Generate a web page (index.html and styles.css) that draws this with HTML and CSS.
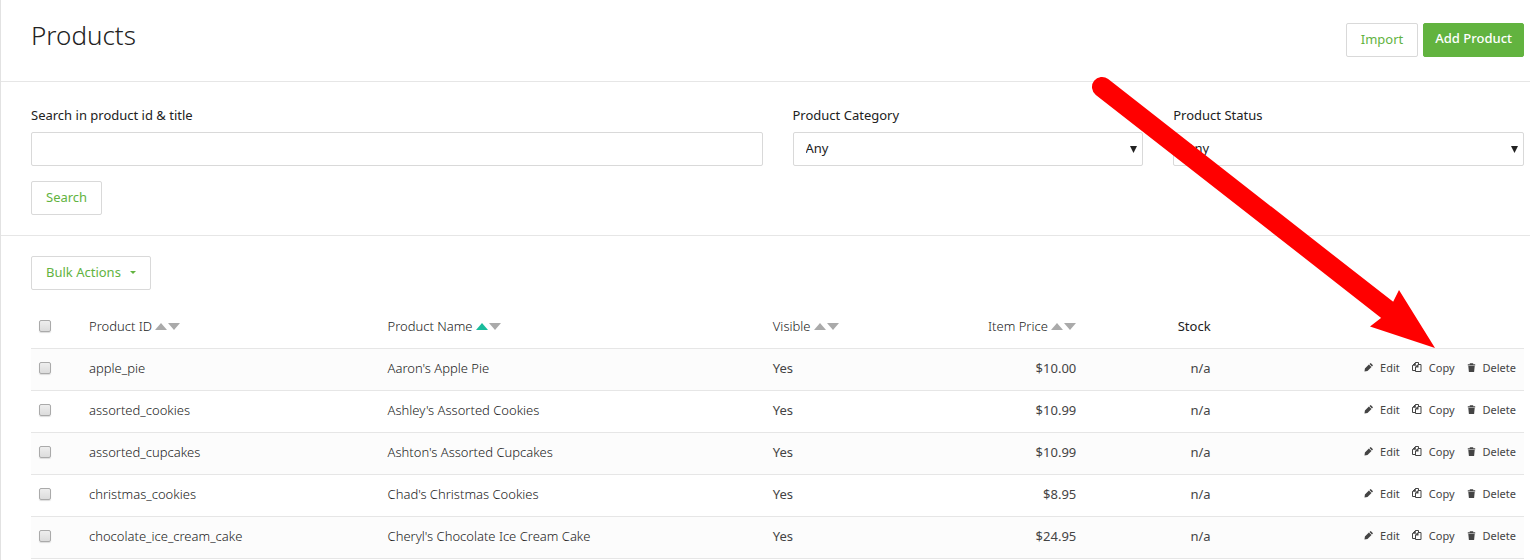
FILE: index.html
```html
<!DOCTYPE html>
<html lang="en">
<head>
<meta charset="utf-8">
<title>Products</title>
<link rel="stylesheet" href="styles.css">
</head>
<body>
<svg class="symbols" aria-hidden="true">
  <symbol id="pencil" viewBox="0 0 9 9"><path d="M.5 8.500l.4-3 4-4 2.600 2.600-4 4zM5.500 1L6.700 0 9 2.200 8 3.500z"/></symbol>
  <symbol id="copy" viewBox="0 0 10 11"><path fill="none" stroke="currentColor" d="M3.500 8.500h-3v-5l3-3h3v2M6 2.500h3v7H3.500V5z"/><path d="M0 3.800L3.800 0v3.800zM3 5.500L6.500 2v3.500z"/></symbol>
  <symbol id="trash" viewBox="0 0 8 9"><path d="M.3 1.200h2V.3h3.400v.9h2v1.300H.3zM.8 3h6.400L6.600 9H1.400z"/></symbol>
</svg>
<main class="page">
  <header class="page-header">
    <h1 class="page-title">Products</h1>
    <div class="page-actions">
      <button class="btn" type="button">Import</button>
      <button class="btn btn-primary" type="button">Add Product</button>
    </div>
  </header>

  <form class="filters">
    <div class="field field-wide">
      <label for="query">Search in product id &amp; title</label>
      <input class="control" id="query" type="text">
    </div>
    <div class="field">
      <label for="category">Product Category</label>
      <select class="control" id="category"><option>Any</option></select>
    </div>
    <div class="field">
      <label for="status">Product Status</label>
      <select class="control" id="status"><option>Any</option></select>
    </div>
    <div class="filter-submit"><button class="btn" type="button">Search</button></div>
  </form>

  <section class="listing">
    <button class="btn bulk" type="button">Bulk Actions<span class="caret"></span></button>
    <table class="products">
      <colgroup><col class="col-check"><col class="col-id"><col class="col-name"><col class="col-visible"><col class="col-price"><col class="col-stock"><col></colgroup>
      <thead>
        <tr>
          <th><input class="check" type="checkbox" aria-label="Select all products"></th>
          <th>Product ID <span class="sort"><i class="up"></i><i class="down"></i></span></th>
          <th>Product Name <span class="sort"><i class="up active"></i><i class="down"></i></span></th>
          <th>Visible <span class="sort"><i class="up"></i><i class="down"></i></span></th>
          <th class="right">Item Price <span class="sort"><i class="up"></i><i class="down"></i></span></th>
          <th class="right strong">Stock</th>
          <th></th>
        </tr>
      </thead>
      <tbody id="rows"></tbody>
    </table>
  </section>

  <svg class="pointer" viewBox="0 0 345 273" aria-hidden="true">
    <path d="M12 11L298 234.500" stroke="#f00" stroke-width="20" stroke-linecap="round"/>
    <path d="M345 272L309 214 303 226 291 242 280 250.500z" fill="#f00"/>
  </svg>
</main>
<script src="products.js"></script>
</body>
</html>
```
FILE: styles.css
```css
* { box-sizing: border-box; }
body {
  margin: 0;
  background: #fff;
  color: #222;
  font: 13px/20px "Noto Sans", "Open Sans", sans-serif;
}
button, input, select { font: inherit; color: inherit; }
.symbols { display: none; }
.page {
  position: relative;
  min-height: 100vh;
  border-left: 1px solid #e2e2e2;
}
.page-header {
  display: flex;
  justify-content: space-between;
  align-items: flex-start;
  padding: 23px 6px 24px 30px;
  border-bottom: 1px solid #e6e6e6;
}
.page-title {
  margin: 0;
  font-size: 26px;
  line-height: 24px;
  font-weight: 300;
}
.page-actions { display: flex; gap: 5px; }
.btn {
  height: 34px;
  padding: 0 14px 2px;
  border: 1px solid #d9d9d9;
  border-radius: 2px;
  background: #fff;
  color: #62b33f;
  line-height: 20px;
}
.btn-primary {
  padding: 0 11px 4px;
  border-color: #62b33f;
  background: #62b33f;
  color: #fff;
  font-weight: 500;
}
.filters {
  display: grid;
  grid-template-columns: repeat(4, minmax(0, 1fr));
  gap: 15px 30px;
  padding: 23px 6px 20px 30px;
  border-bottom: 1px solid #e6e6e6;
}
.field { display: flex; flex-direction: column; gap: 7px; }
.field-wide { grid-column: span 2; }
.filter-submit { grid-column: 1 / -1; }
.control {
  width: 100%;
  height: 34px;
  padding: 0 12px 2px;
  border: 1px solid #d9d9d9;
  border-radius: 2px;
  background: #fff;
}
select.control {
  appearance: none;
  background: #fff url("data:image/svg+xml,%3Csvg xmlns='http://www.w3.org/2000/svg' width='8' height='7'%3E%3Cpath d='M1 0h7L4.500 7z' fill='%23222'/%3E%3C/svg%3E") no-repeat right 5px center;
}
.listing { padding: 20px 6px 0 30px; }
.bulk { display: flex; align-items: center; gap: 9px; }
.caret {
  border: 3px solid transparent;
  border-top-color: currentColor;
  border-bottom: 0;
}
.products {
  width: 100%;
  margin-top: 15px;
  table-layout: fixed;
  border-collapse: collapse;
}
.col-check { width: 50px; }
.col-id { width: 20%; }
.col-name { width: 25.8%; }
.col-visible { width: 11%; }
.col-price { width: 10.4%; }
.col-stock { width: 9%; }
.products th, .products td {
  height: 42px;
  padding: 0 8px 3px;
  border-bottom: 1px solid #e6e6e6;
  font-weight: 300;
  text-align: left;
  white-space: nowrap;
}
.products thead th { height: 43px; padding-bottom: 0; }
.products tbody tr:nth-child(odd) { background: #fcfcfc; }
.products .right { text-align: right; }
.products .strong { font-weight: 400; }
.products .plain { font-weight: 400; color: #444; }
.products td:first-child { padding-bottom: 2px; }
.check {
  display: block;
  appearance: none;
  width: 12px;
  height: 12px;
  margin: 0;
  border: 1px solid #aaa;
  border-radius: 2px;
  background: linear-gradient(#eee, #dcdcdc);
  box-shadow: 0 1px 1px #ddd;
}
.sort { display: inline-flex; gap: 1px; vertical-align: 1px; }
.up, .down { border: 6px solid transparent; }
.up { border-top: 0; border-bottom: 7px solid #aaa; }
.down { border-bottom: 0; border-top: 7px solid #aaa; }
.up.active { border-bottom-color: #1abc9c; }
.row-actions { display: flex; justify-content: flex-end; gap: 12px; }
.row-actions a {
  display: flex;
  align-items: center;
  gap: 7px;
  color: #444;
  font-size: 11px;
  font-weight: 400;
  text-decoration: none;
}
.icon { width: 9px; height: 9px; fill: currentColor; }
.icon-copy { width: 10px; height: 11px; }
.pointer {
  position: absolute;
  top: 76px;
  right: 95px;
  width: 345px;
  height: 273px;
  pointer-events: none;
}
```
FILE: products.js
```js
const products = [
  ["apple_pie", "Aaron's Apple Pie", "$10.00"],
  ["assorted_cookies", "Ashley's Assorted Cookies", "$10.99"],
  ["assorted_cupcakes", "Ashton's Assorted Cupcakes", "$10.99"],
  ["christmas_cookies", "Chad's Christmas Cookies", "$8.95"],
  ["chocolate_ice_cream_cake", "Cheryl's Chocolate Ice Cream Cake", "$24.95"]
];
const action = (icon, text) =>
  `<a href="#"><svg class="icon icon-${icon}" aria-hidden="true"><use href="#${icon}"/></svg>${text}</a>`;
document.getElementById("rows").innerHTML = products.map(([id, name, price]) => `
  <tr>
    <td><input class="check" type="checkbox" aria-label="Select ${id}"></td>
    <td>${id}</td>
    <td>${name}</td>
    <td class="plain">Yes</td>
    <td class="right plain">${price}</td>
    <td class="right plain">n/a</td>
    <td><div class="row-actions">${action("pencil", "Edit")}${action("copy", "Copy")}${action("trash", "Delete")}</div></td>
  </tr>`).join("");
```
